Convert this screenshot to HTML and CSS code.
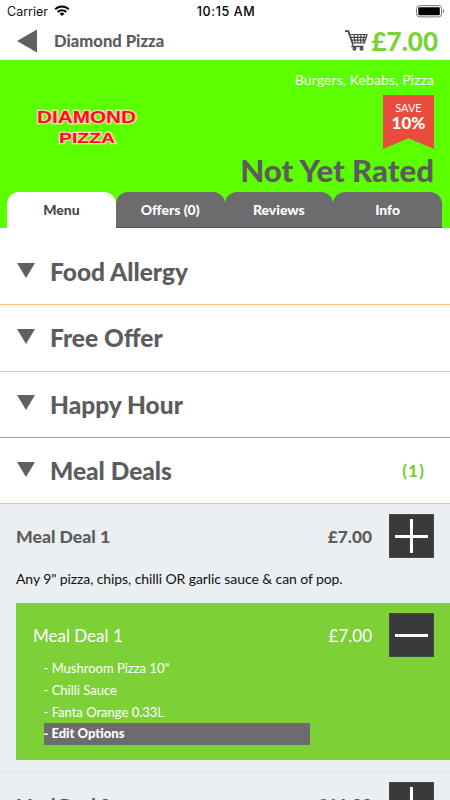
FILE: index.html
```html
<!DOCTYPE html>
<html lang="en">
<head>
    <meta charset="UTF-8">
    <meta name="viewport" content="width=device-width, initial-scale=1.0">
    <title>Diamond Pizza</title>
    <link rel="stylesheet" href="styles.css">
</head>
<body>
    <div class="status-bar">
        <div class="carrier">
            <span>Carrier</span>
            <svg class="wifi" width="16" height="12" viewBox="0 0 16 12" fill="none" stroke="#000" stroke-width="2">
                <path d="M1.2 4.4a9.6 9.6 0 0 1 13.6 0M3.7 7a6.1 6.1 0 0 1 8.6 0"/>
                <path d="M8 11 5.6 8.7a3.4 3.4 0 0 1 4.8 0z" fill="#000" stroke="none"/>
            </svg>
        </div>
        <div class="clock">10:15 AM</div>
        <div class="battery">
            <svg width="29" height="13" viewBox="0 0 29 13">
                <rect x=".6" y=".6" width="25" height="11.3" rx="3" fill="#fff" stroke="#777"/>
                <rect x="2.3" y="2.3" width="21.5" height="7.9" rx="1" fill="#000"/>
                <path d="M27 4.3c1.5.6 1.5 3.4 0 4z" fill="#777"/>
            </svg>
        </div>
    </div>

    <div class="nav">
        <svg class="back" width="21" height="24" viewBox="0 0 21 24"><path d="M0 12 20 .5v23z" fill="#606060"/></svg>
        <h1>Diamond Pizza</h1>
        <div class="basket">
            <svg width="23" height="21" viewBox="0 0 23 21" fill="none" stroke="#484848">
                <path d="M0 1.2h3.3L8 14.5" stroke-width="1.8"/>
                <path d="M4.5 4.5H22L19.5 13H7.5M6 7.3h15M7 10.2h13.3M9 4.500l1.2 8.500M12.500 4.500l.4 8.500M16 4.500l-.4 8.500M19.300 4.500 18 13" stroke-width="1.2"/>
                <path d="M8 14.500 7 16.500h11.500" stroke-width="1.3"/>
                <circle cx="9.500" cy="18.700" r="1.200" stroke-width="1.6"/>
                <circle cx="16.500" cy="18.700" r="1.200" stroke-width="1.6"/>
            </svg>
            <span class="basket-total">£7.00</span>
        </div>
    </div>

    <div class="hero">
        <div class="hero-info">
            <svg class="logo" width="104" height="42" viewBox="0 0 104 42">
                <text x="2" y="18" font-size="16.5" textLength="99" lengthAdjust="spacingAndGlyphs">DIAMOND</text>
                <text x="24" y="37.500" font-size="14" textLength="56" lengthAdjust="spacingAndGlyphs">PIZZA</text>
            </svg>
            <div class="hero-right">
                <div class="cuisine">Burgers, Kebabs, Pizza</div>
                <div class="ribbon">
                    <span class="ribbon-label">SAVE</span>
                    <span class="ribbon-value">10%</span>
                </div>
                <div class="rating">Not Yet Rated</div>
            </div>
        </div>
        <div class="tabs">
            <div class="tab active">Menu</div>
            <div class="tab">Offers (0)</div>
            <div class="tab">Reviews</div>
            <div class="tab">Info</div>
        </div>
    </div>

    <div class="menu">
        <div class="category"><i class="arrow"></i><h2>Food Allergy</h2></div>
        <div class="category"><i class="arrow"></i><h2>Free Offer</h2></div>
        <div class="category category-orange"><i class="arrow"></i><h2>Happy Hour</h2></div>
        <div class="category"><i class="arrow"></i><h2>Meal Deals</h2><span class="count">(1)</span></div>
    </div>

    <div class="item">
        <div class="item-row">
            <h3>Meal Deal 1</h3>
            <span class="price">£7.00</span>
            <div class="btn plus"></div>
        </div>
        <p class="description">Any 9" pizza, chips, chilli OR garlic sauce &amp; can of pop.</p>
        <div class="selected">
            <div class="item-row">
                <h3>Meal Deal 1</h3>
                <span class="price">£7.00</span>
                <div class="btn"></div>
            </div>
            <ul class="options">
                <li>- Mushroom Pizza 10"</li>
                <li>- Chilli Sauce</li>
                <li>- Fanta Orange 0.33L</li>
                <li class="edit">- Edit Options</li>
            </ul>
        </div>
    </div>

    <div class="item">
        <div class="item-row">
            <h3>Meal Deal 2</h3>
            <span class="price">£11.00</span>
            <div class="btn plus"></div>
        </div>
    </div>
</body>
</html>
```

FILE: styles.css
```css
* {
    margin: 0;
    padding: 0;
    box-sizing: border-box;
}

body {
    width: 450px;
    height: 800px;
    overflow: hidden;
    background: #fff;
    color: #5c5c5d;
    font-family: Lato, sans-serif;
}

.status-bar {
    display: grid;
    grid-template-columns: 1fr auto 1fr;
    align-items: center;
    height: 22px;
    padding: 0 5px 0 7px;
    font-family: Inter, sans-serif;
    font-size: 12.5px;
    color: #111;
}

.carrier {
    display: flex;
    align-items: center;
    gap: 6px;
}

.clock {
    font-weight: 500;
    letter-spacing: 0.6px;
    color: #000;
}

.battery {
    display: flex;
    justify-content: flex-end;
}

.nav {
    display: flex;
    align-items: center;
    height: 38px;
    padding: 0 12px 0 17px;
    border-bottom: 1px solid #e9f8df;
}

.nav h1 {
    margin-left: 16px;
    font-size: 16.6px;
    font-weight: 900;
}

.basket {
    display: flex;
    align-items: center;
    gap: 3px;
    margin-left: auto;
}

.basket-total {
    font-size: 26px;
    line-height: 36px;
    font-weight: 900;
    color: #7bd136;
}

.hero {
    height: 168px;
    background: #5cff00;
}

.hero-info {
    display: flex;
    justify-content: space-between;
    height: 132px;
    padding: 11px 16px 0 35px;
}

.logo {
    margin-top: 34px;
    overflow: visible;
}

.logo text {
    font-family: "Liberation Sans", sans-serif;
    font-weight: 700;
    fill: #ff1010;
    stroke: #ffd5b8;
    stroke-width: 2.5px;
    paint-order: stroke;
}

.hero-right {
    display: flex;
    flex-direction: column;
    align-items: flex-end;
}

.cuisine {
    font-size: 14px;
    line-height: 18px;
    letter-spacing: 0.1px;
    color: #fff;
}

.ribbon {
    display: flex;
    flex-direction: column;
    align-items: center;
    width: 51px;
    height: 54px;
    margin-top: 6px;
    padding-top: 6px;
    background: #e94b3c;
    color: #fff;
    clip-path: polygon(0 0, 100% 0, 100% 100%, 50% 80%, 0 100%);
}

.ribbon-label {
    font-size: 11px;
    line-height: 14px;
}

.ribbon-value {
    font-size: 17px;
    line-height: 15px;
    font-weight: 900;
}

.rating {
    margin-top: 3px;
    font-size: 31.2px;
    line-height: 36px;
    font-weight: 900;
    white-space: nowrap;
}

.tabs {
    display: flex;
    height: 36px;
    padding: 0 8px 0 7px;
}

.tab {
    flex: 1;
    border-radius: 12px 12px 0 0;
    background: #6c6c6e;
    border-bottom: 1px solid #555;
    color: #fff;
    font-size: 14px;
    line-height: 36px;
    font-weight: 900;
    text-align: center;
}

.tab.active {
    background: #fff;
    border-color: #fff;
    color: #484848;
}

.menu {
    padding-top: 11px;
}

.category {
    display: flex;
    align-items: center;
    height: 66.3px;
    padding: 0 25px 0 17px;
    border-bottom: 1px solid #ffba80;
}

.category-orange {
    border-color: #f39a1a;
}

.arrow {
    margin-top: -3px;
    border: 9px solid transparent;
    border-top: 15px solid #606060;
    border-bottom: 0;
}

.category h2 {
    margin-left: 15px;
    font-size: 24.5px;
    font-weight: 900;
}

.count {
    margin-left: auto;
    font-size: 17px;
    font-weight: 700;
    letter-spacing: 1.2px;
    color: #6fcb20;
}

.item {
    padding: 10px 0 11px 16px;
    border-bottom: 1px solid #dfe3e4;
    background: #ebeff1;
}

.item-row {
    display: flex;
    align-items: center;
    padding-right: 16px;
}

.item-row h3 {
    flex: 1;
    font-size: 17.6px;
    font-weight: 900;
}

.price {
    margin-right: 17px;
    font-size: 17.3px;
    font-weight: 900;
}

.btn {
    width: 45px;
    height: 44px;
    border: 1px solid #484849;
    background: linear-gradient(#fff, #fff) center / 33px 3px no-repeat #3a3a3c;
}

.btn.plus {
    background:
        linear-gradient(#fff, #fff) center / 33px 3px no-repeat,
        linear-gradient(#fff, #fff) center / 3px 34px no-repeat,
        #3a3a3c;
}

.description {
    margin: 12px 0 15px;
    font-size: 14px;
    line-height: 18px;
    letter-spacing: -0.09px;
    color: #111;
}

.selected {
    height: 157px;
    padding: 10px 0 0 17px;
    background: #7dd137;
    color: #fff;
}

.selected h3,
.selected .price {
    font-size: 17px;
    font-weight: 400;
}

.options {
    width: 266px;
    margin: 1px 0 0 10.5px;
    list-style: none;
    font-size: 13px;
    line-height: 21.7px;
}

.options .edit {
    background: #6c6c6e;
    font-weight: 900;
}
```
